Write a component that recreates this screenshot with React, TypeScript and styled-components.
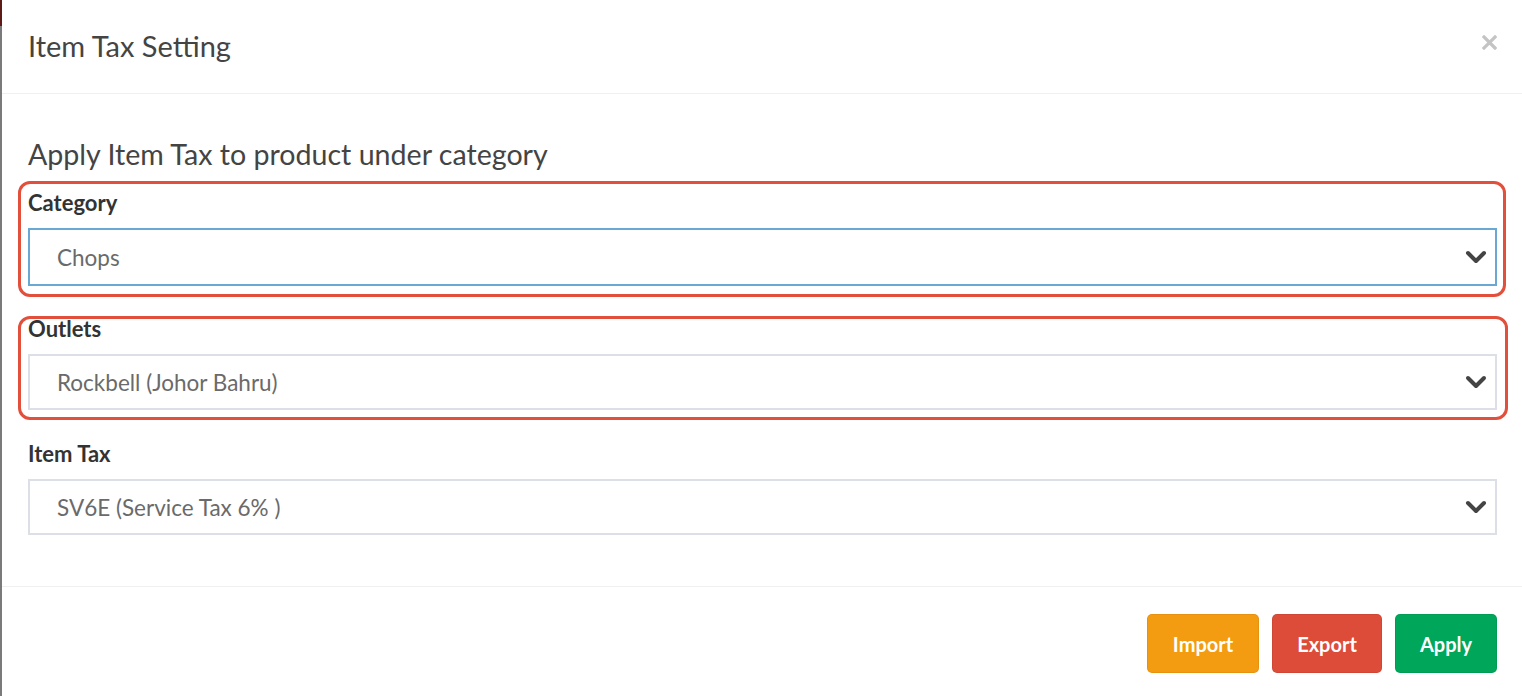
import React from "react";
import styled, { createGlobalStyle } from "styled-components";

const GlobalStyle = createGlobalStyle`
  html, body { margin: 0; padding: 0; background: #ffffff; }
  body { font-family: Lato, "Liberation Sans", sans-serif; }
  * { box-sizing: border-box; }
`;

const Page = styled.div`
  display: flex;
  width: 1522px;
  height: 696px;
  overflow: hidden;
`;

const Edge = styled.div`
  width: 2px;
  display: flex;
  flex-direction: column;
  background: #7a7a7a;
`;

const EdgeTop = styled.div`
  height: 26px;
  background: #5e1a16;
`;

const Modal = styled.div`
  flex: 1;
  display: flex;
  flex-direction: column;
  background: #ffffff;
`;

const Header = styled.div`
  height: 94px;
  display: flex;
  align-items: center;
  justify-content: space-between;
  padding: 0 25px 3px 26px;
  border-bottom: 1px solid #f0f0f0;
`;

const Title = styled.h4`
  margin: 0;
  font-size: 29px;
  font-weight: 400;
  color: #444444;
`;

const CloseButton = styled.button`
  border: 0;
  background: none;
  padding: 0;
  width: 15px;
  height: 15px;
  display: flex;
  margin-top: -5px;
  cursor: pointer;
`;

const Body = styled.div`
  display: flex;
  flex-direction: column;
  padding: 42px 25px 0 26px;
  height: 493px;
  border-bottom: 1px solid #f0f0f0;
`;

const Subheading = styled.h3`
  margin: 0 0 9px;
  font-size: 28.6px;
  line-height: 36px;
  font-weight: 400;
  color: #444444;
`;

const Highlight = styled.div<{ $top: number; $bottom: number; $right: number }>`
  margin: 0 -${(p) => p.$right}px 0 -10px;
  padding: ${(p) => p.$top}px ${(p) => p.$right - 3}px ${(p) => p.$bottom}px 7px;
  border: 3px solid #e2503c;
  border-radius: 12px;
`;

const Group = styled.div<{ $mt?: number }>`
  display: flex;
  flex-direction: column;
  gap: 15px;
  margin-top: ${(p) => p.$mt ?? 0}px;
`;

const Label = styled.label`
  font-size: 22px;
  line-height: 20px;
  font-weight: 700;
  color: #333333;
`;

const SelectBox = styled.div<{ $focused?: boolean; $h: number }>`
  height: ${(p) => p.$h}px;
  display: flex;
  align-items: center;
  justify-content: space-between;
  padding: 0 8px 0 27px;
  border: 2px solid ${(p) => (p.$focused ? "#6aa8d4" : "#dcdfe6")};
  background: #ffffff;
`;

const SelectText = styled.span`
  font-size: 22.5px;
  color: #6a6a6a;
`;

const Footer = styled.div`
  flex: 1;
  display: flex;
  justify-content: flex-end;
  align-items: flex-start;
  gap: 13px;
  padding: 27px 25px 0 0;
`;

const Button = styled.button<{ $bg: string; $w: number }>`
  width: ${(p) => p.$w}px;
  height: 59px;
  border: 1px solid rgba(0, 0, 0, 0.06);
  border-radius: 5px;
  background: ${(p) => p.$bg};
  color: #ffffff;
  font-family: Lato, "Liberation Sans", sans-serif;
  font-size: 20px;
  font-weight: 700;
  cursor: pointer;
`;

const Chevron = () => (
  <svg width="22" height="14" viewBox="0 0 22 14">
    <polyline
      points="3,3 11,11 19,3"
      fill="none"
      stroke="#444444"
      strokeWidth="4"
      strokeLinecap="round"
      strokeLinejoin="round"
    />
  </svg>
);

const CloseIcon = () => (
  <svg width="15" height="15" viewBox="0 0 15 15">
    <path d="M2 2 L13 13 M13 2 L2 13" stroke="#c4c4c4" strokeWidth="3.2" strokeLinecap="square" />
  </svg>
);

export default function App() {
  return (
    <>
      <GlobalStyle />
      <Page>
        <Edge>
          <EdgeTop />
        </Edge>
        <Modal>
          <Header>
            <Title>Item Tax Setting</Title>
            <CloseButton aria-label="Close">
              <CloseIcon />
            </CloseButton>
          </Header>
          <Body>
            <Subheading>Apply Item Tax to product under category</Subheading>
            <Highlight $top={9} $bottom={8} $right={9}>
              <Group>
                <Label>Category</Label>
                <SelectBox $focused $h={58}>
                  <SelectText>Chops</SelectText>
                  <Chevron />
                </SelectBox>
              </Group>
            </Highlight>
            <Highlight $top={0} $bottom={7} $right={11} style={{ marginTop: 19 }}>
              <Group>
                <Label>Outlets</Label>
                <SelectBox $h={56}>
                  <SelectText>Rockbell (Johor Bahru)</SelectText>
                  <Chevron />
                </SelectBox>
              </Group>
            </Highlight>
            <Group $mt={24}>
              <Label>Item Tax</Label>
              <SelectBox $h={56}>
                <SelectText>SV6E (Service Tax 6% )</SelectText>
                <Chevron />
              </SelectBox>
            </Group>
          </Body>
          <Footer>
            <Button $bg="#f39c12" $w={112}>Import</Button>
            <Button $bg="#dd4b39" $w={110}>Export</Button>
            <Button $bg="#00a65a" $w={102}>Apply</Button>
          </Footer>
        </Modal>
      </Page>
    </>
  );
}
